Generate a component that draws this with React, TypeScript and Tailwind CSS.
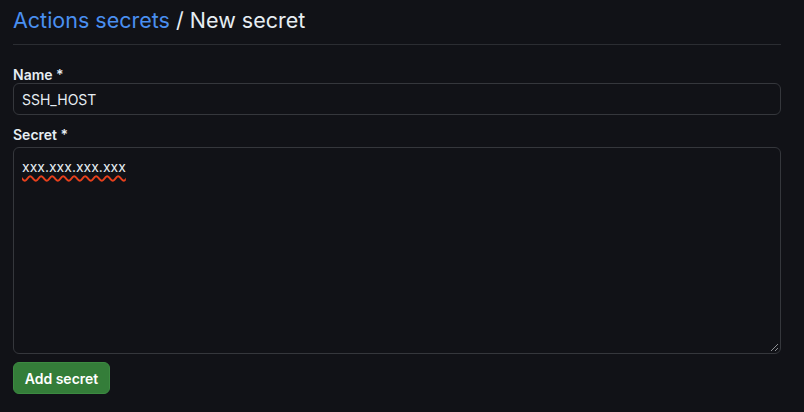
import React from "react";

export default function App() {
  return (
    <div
      className="min-h-[412px] w-full bg-[#111217] text-[#e6edf3]"
      style={{ fontFamily: "Inter, 'Noto Sans', sans-serif" }}
    >
      <div className="pl-[13px] pr-[23px] pt-[4px]">
        <div className="border-b border-[#2b2d32] pb-[7px]">
          <h2 className="text-[21.5px] leading-[33px] font-normal">
            <span className="text-[#4a8ff0]">Actions secrets</span>
            <span className="text-[#e6edf3]"> / New secret</span>
          </h2>
        </div>
        <div className="mt-[20px]">
          <div className="text-[14px] font-semibold leading-[20px] text-[#e6edf3]">Name *</div>
          <div className="mt-[-2px] h-[32px] rounded-[6px] border border-[#35373c] bg-[#111217] px-[8px] flex items-center text-[14px] text-[#e6edf3]">
            SSH_HOST
          </div>
        </div>
        <div className="mt-[10px]">
          <div className="text-[14px] font-semibold leading-[20px] text-[#e6edf3]">Secret *</div>
          <div className="relative mt-[2px] h-[207px] rounded-[6px] border border-[#35373c] bg-[#111217] px-[8px] pt-[9px] text-[14px] leading-[20px] text-[#e6edf3]">
            <span className="underline decoration-wavy decoration-[#e8401c] decoration-[1.5px] underline-offset-[3px]">
              xxx.xxx.xxx.xxx
            </span>
            <svg
              className="absolute bottom-[1px] right-[1px]"
              width="9"
              height="9"
              viewBox="0 0 9 9"
            >
              <path d="M8 1L1 8M8 5L5 8" stroke="#8b8d92" strokeWidth="1" />
            </svg>
          </div>
        </div>
        <button className="mt-[8px] h-[32px] w-[97px] rounded-[6px] border border-[#3c8a41] bg-[#347d39] text-[14px] font-semibold text-white">
          Add secret
        </button>
      </div>
    </div>
  );
}
